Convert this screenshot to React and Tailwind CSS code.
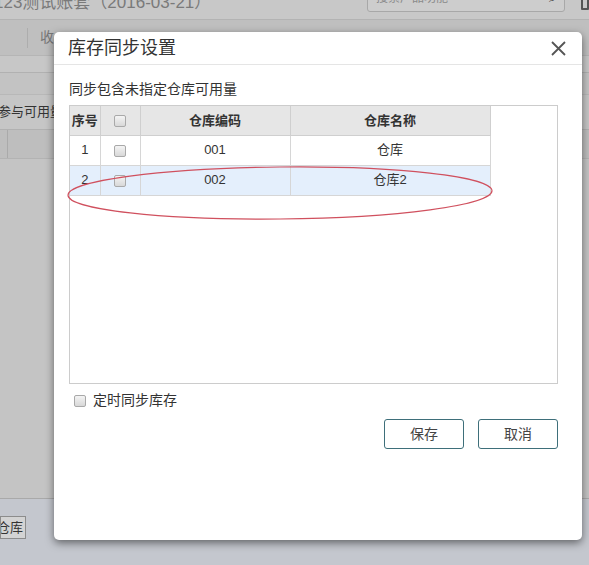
import React from 'react'

const font = { fontFamily: '"Liberation Sans", "Noto Sans CJK SC", sans-serif' }

const Box = ({ className = '' }) => (
  <span
    className={`inline-block w-[12px] h-[12px] rounded-[2px] border border-[#a9a9a9] bg-gradient-to-b from-[#f4f4f4] to-[#d8d8d8] ${className}`}
  />
)

const rows = [
  { no: 1, code: '001', name: '仓库' },
  { no: 2, code: '002', name: '仓库2' },
]

const Background = () => (
  <div className="w-[589px] h-[565px] flex flex-col bg-[#c6c6c6] overflow-hidden">
    {/* top bar */}
    <div className="h-[20px] flex items-end border-b border-[#b3b3b3] bg-[#c8c8c8] relative">
      <span className="text-[17px] leading-none text-[#7a7a7a] -translate-y-[8px] -ml-[6px]">123测试账套（2016-03-21）</span>
      <div className="ml-auto mr-[24px] w-[198px] h-[32px] -mt-[20px] self-start rounded-[3px] border border-[#a8a8a8] bg-[#cdcdcd] flex items-end justify-between px-[8px] pb-[2px]">
        <span className="text-[12px] text-[#8a8a8a] -translate-y-[2px]">搜索产品功能</span>
        <span className="text-[12px] text-[#555] -translate-y-[2px]">⌕</span>
      </div>
      <span className="absolute right-0 top-[-4px] w-[8px] h-[14px] border-2 border-[#555] rounded-[1px]" />
    </div>
    {/* tab band */}
    <div className="h-[36px] flex items-center bg-[#bfbfbf] border-b border-[#b5b5b5]">
      <span className="ml-[27px] w-px h-[20px] bg-[#adadad]" />
      <span className="ml-[12px] text-[14px] text-[#777]">收</span>
    </div>
    <div className="h-[17px] bg-[#c7c7c7] border-b border-[#b1b1b1]" />
    <div className="h-[22px] bg-[#c3c3c3] border-b border-[#b8b8b8]" />
    <div className="h-[35px] flex items-center bg-[#c6c6c6] border-b border-[#b1b1b1]">
      <span className="text-[13px] text-[#333] -ml-[2px]">参与可用量</span>
    </div>
    <div className="h-[29px] flex bg-[#bebebe] border-b border-[#b3b3b3]">
      <span className="ml-[7px] w-px h-full bg-[#aaaaaa]" />
    </div>
    <div className="flex-1 bg-[#c4c4c4] border-b border-[#a9a9a9]" />
    <div className="h-[66px] bg-[#c4c7ce] pt-[17px]">
      <div className="w-[26px] h-[23px] border border-[#8c8c8c] bg-[#d3d3d3] flex items-center justify-end overflow-hidden pr-[2px] text-[13px] text-[#333] whitespace-nowrap">
        仓库
      </div>
    </div>
  </div>
)

export default function App() {
  return (
    <div className="relative w-[589px] h-[565px] overflow-hidden" style={font}>
      <Background />

      {/* dialog */}
      <div className="absolute left-[54px] top-[32px] w-[528px] h-[508px] bg-white rounded-[5px] shadow-[0_3px_9px_rgba(0,0,0,0.5)] flex flex-col">
        <div className="h-[33px] border-b border-[#e5e5e5] flex items-center justify-between pl-[14px] pr-[16px]">
          <span className="text-[18px] text-[#333]">库存同步设置</span>
          <svg width="15" height="15" viewBox="0 0 15 15" className="text-[#555]">
            <path d="M1 1 L14 14 M14 1 L1 14" stroke="currentColor" strokeWidth="1.8" />
          </svg>
        </div>

        <div className="px-[15px] pt-[15px] flex flex-col">
          <div className="text-[14px] text-[#333] leading-[18px] h-[22px]">同步包含未指定仓库可用量</div>
          <div className="relative mt-[3px] w-[489px] h-[279px] border border-[#cccccc]">
            <table className="border-collapse text-[13px] text-[#333]">
              <thead>
                <tr className="h-[29px] bg-[#e6e6e6]">
                  <th className="w-[30px] border-r border-b border-[#cfcfcf] font-bold">序号</th>
                  <th className="w-[40px] border-r border-b border-[#cfcfcf]">
                    <Box className="align-middle" />
                  </th>
                  <th className="w-[150px] border-r border-b border-[#cfcfcf] font-bold">仓库编码</th>
                  <th className="w-[200px] border-r border-b border-[#cfcfcf] font-bold">仓库名称</th>
                </tr>
              </thead>
              <tbody>
                {rows.map((r, i) => (
                  <tr key={r.no} className={`h-[30px] ${i === 1 ? 'bg-[#e4effc]' : 'bg-white'}`}>
                    <td className="border-r border-b border-[#d6d6d6] text-center">{r.no}</td>
                    <td className="border-r border-b border-[#d6d6d6] text-center">
                      <Box className="align-middle" />
                    </td>
                    <td className="border-r border-b border-[#d6d6d6] text-center">{r.code}</td>
                    <td className="border-r border-b border-[#d6d6d6] text-center">{r.name}</td>
                  </tr>
                ))}
              </tbody>
            </table>
            {/* red marker ellipse */}
            <svg className="absolute left-[-4px] top-[59px] pointer-events-none" width="432" height="58" viewBox="0 0 432 58">
              <ellipse cx="214" cy="28" rx="212" ry="26" transform="rotate(-0.6 214 28)" fill="none" stroke="#d0505e" strokeWidth="1.2" />
            </svg>
          </div>

          <label className="flex items-center mt-[8px] ml-[5px] h-[17px] text-[14px] text-[#333]">
            <Box />
            <span className="ml-[7px]">定时同步库存</span>
          </label>

          <div className="w-[489px] flex justify-end gap-[14px] mt-[10px]">
            <button className="w-[80px] h-[30px] rounded-[3px] border border-[#3e6f7a] bg-white text-[14px] text-[#444]">保存</button>
            <button className="w-[80px] h-[30px] rounded-[3px] border border-[#3e6f7a] bg-white text-[14px] text-[#444]">取消</button>
          </div>
        </div>
      </div>
    </div>
  )
}
